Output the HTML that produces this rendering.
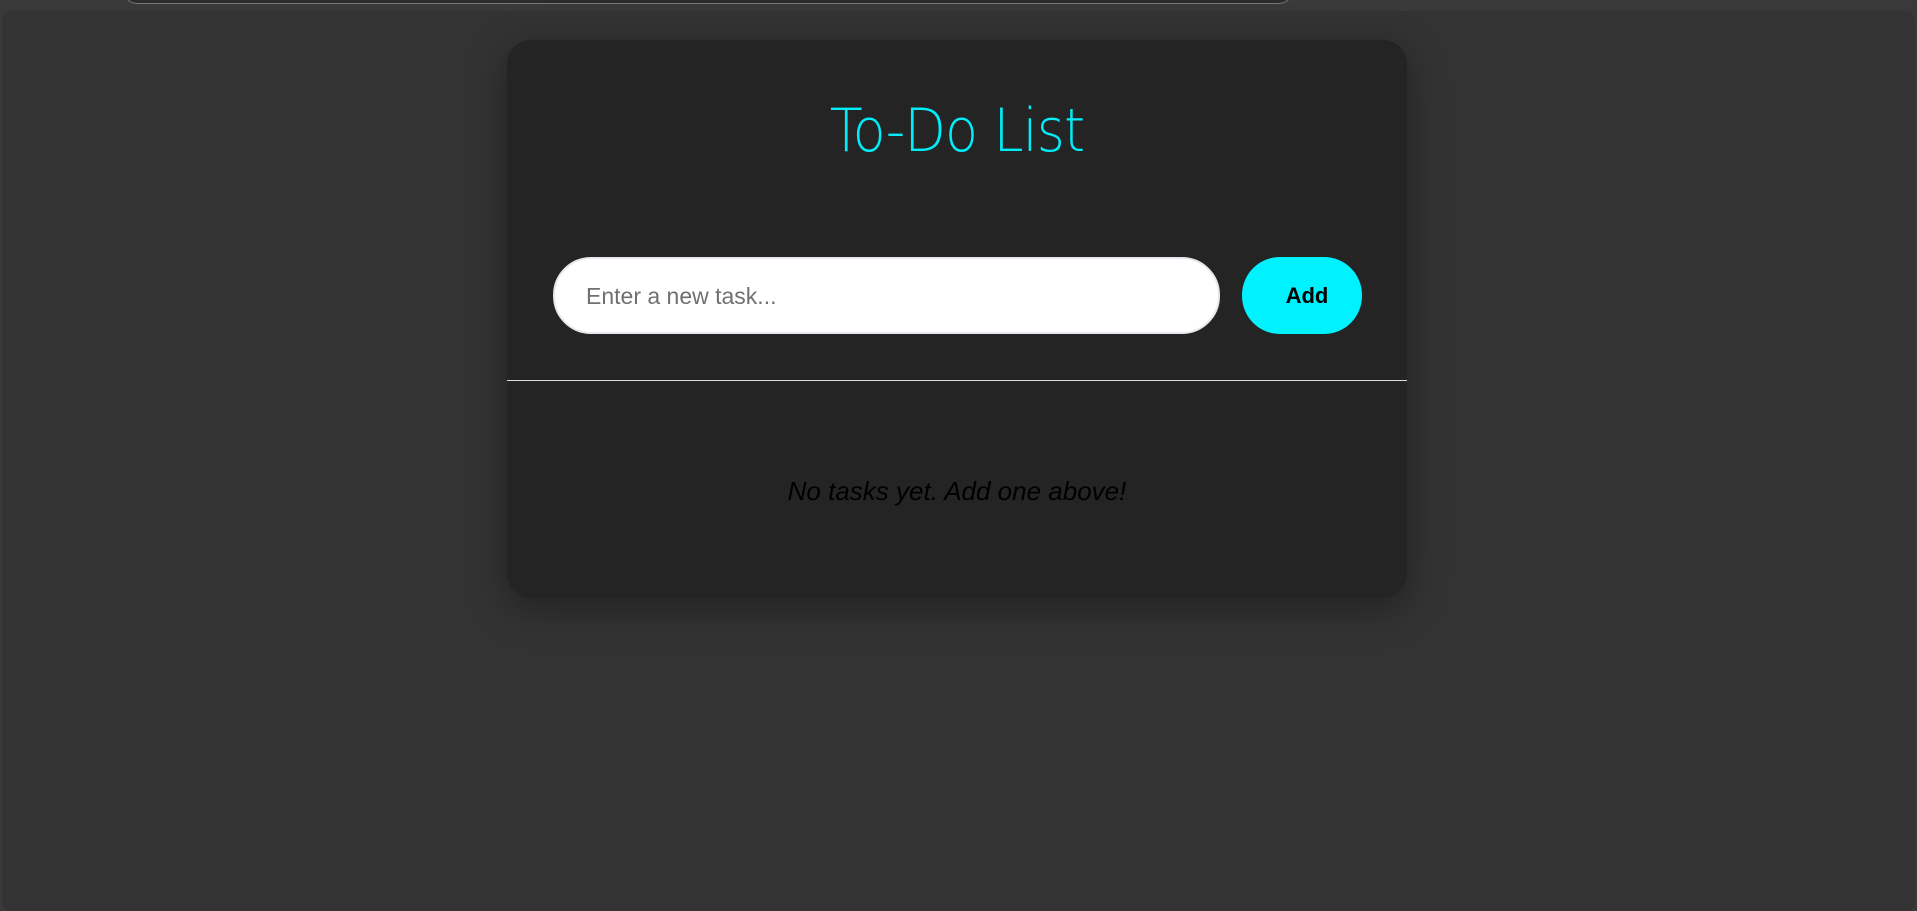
<!DOCTYPE html>
<html><head><style>
html,body{margin:0;padding:0;width:1917px;height:903px;overflow:hidden;background:#393939;font-family:"Liberation Sans",sans-serif;}
.bar{position:absolute;left:123px;top:-20px;width:1168px;height:23px;background:#2c2c2c;border:1px solid #777;border-top:none;border-radius:0 0 14px 14px;}
.panel{position:absolute;left:2px;top:11px;width:1913px;height:900px;background:#333;border-radius:9px;}
.card{position:absolute;left:507px;top:40px;width:900px;height:558px;background:#242424;border-radius:24px;box-shadow:0 10px 40px rgba(0,0,0,.35);}
h1{position:absolute;left:0;right:0;top:52px;margin:0;text-align:center;color:#00eefa;font-size:60px;line-height:78px;letter-spacing:-1px;font-family:"DejaVu Sans","Liberation Sans",sans-serif;font-weight:200;transform:scaleX(0.9);}
.input{position:absolute;left:46px;top:217px;width:663px;height:73px;background:#fff;border:2px solid #e5e8ec;border-radius:38px;box-sizing:content-box;}
.input span{position:absolute;left:31px;top:24px;font-size:23px;color:#707070;}
.btn{position:absolute;left:735px;top:217px;width:120px;height:77px;background:#00f2fe;border-radius:38px;text-align:center;line-height:77px;font-weight:bold;font-size:22px;color:#000;padding-left:10px;box-sizing:border-box;}
.hr{position:absolute;left:0;right:0;top:340px;height:1px;background:#ddd;}
.empty{position:absolute;left:0;right:0;top:436px;text-align:center;font-style:italic;font-size:26px;color:#000;}
</style></head><body>
<div class="bar"></div>
<div class="panel"></div>
<div class="card">
<h1>To-Do List</h1>
<div class="input"><span>Enter a new task...</span></div>
<div class="btn">Add</div>
<div class="hr"></div>
<div class="empty">No tasks yet. Add one above!</div>
</div>
</body></html>
